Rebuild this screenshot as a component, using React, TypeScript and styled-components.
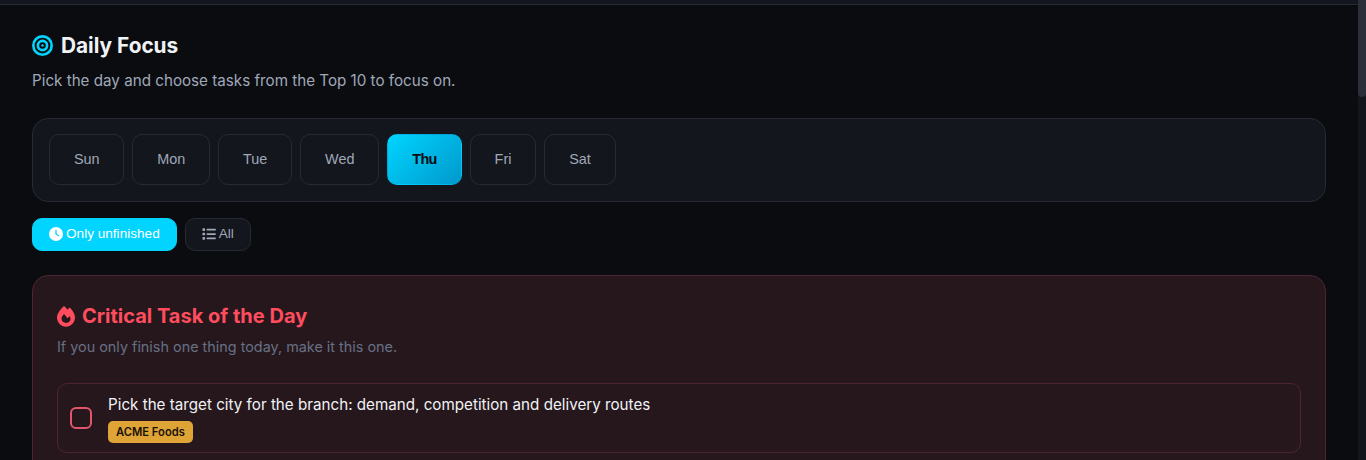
import * as React from "react";
import styled, {createGlobalStyle} from "styled-components";
import {FaBullseye, FaClock, FaFire, FaList} from "react-icons/fa6";

const days = ["Sun", "Mon", "Tue", "Wed", "Thu", "Fri", "Sat"];
const activeDay = "Thu";

const Global = createGlobalStyle`
    html, body {
        height: 100%;
        overflow: hidden;
        background: #0a0c10;
    }
    body {
        margin: 0;
        font-family: "Inter", "Liberation Sans", sans-serif;
        color: #f0f2f5;
    }
    * {
        box-sizing: border-box;
    }
`;

const Shell = styled.div`
    display: flex;
    height: 100vh;
    overflow: hidden;
    background: #0a0c10;
`;

const Content = styled.div`
    flex: 1;
    min-width: 0;
`;

const ScrollRail = styled.div`
    flex: none;
    width: 8px;
    background: #13161d;
`;

const ScrollThumb = styled.div`
    height: 97px;
    background: #2a2f3a;
    border-radius: 0 0 4px 4px;
`;

const TopBar = styled.div`
    height: 5px;
    background: #13161d;
    border-bottom: 1px solid #262a35;
`;

const Main = styled.main`
    padding: 25px 32px 32px;
`;

const Heading = styled.h1`
    display: flex;
    align-items: center;
    gap: 8px;
    margin: 0;
    height: 30px;
    font-size: 20.8px;
    font-weight: 700;
    color: #f0f2f5;
    svg {
        color: #00d4ff;
        font-size: 21px;
    }
`;

const Subtitle = styled.p`
    margin: 11px 0 0;
    font-size: 15.2px;
    line-height: 20px;
    color: #a0a8b8;
`;

const DayPanel = styled.div`
    display: flex;
    gap: 8px;
    margin-top: 27px;
    padding: 15px 16px;
    height: 84px;
    background: #13161d;
    border: 1px solid #262a35;
    border-radius: 16px;
`;

const DayButton = styled.button<{$active?: boolean}>`
    height: 51px;
    padding: 0 23.9px 2px;
    font-family: "Liberation Sans", Arial, sans-serif;
    font-size: 14.4px;
    font-weight: ${p => p.$active ? 700 : 400};
    letter-spacing: ${p => p.$active ? "-0.6px" : "0"};
    color: ${p => p.$active ? "#0a0c10" : "#a0a8b8"};
    background: ${p => p.$active ? "linear-gradient(135deg, #00d4ff, #0099cc)" : "#13161d"};
    border: 1px solid ${p => p.$active ? "transparent" : "#262a35"};
    border-radius: 10px;
`;

const FilterRow = styled.div`
    display: flex;
    gap: 8px;
    margin-top: 16px;
`;

const FilterButton = styled.button<{$active?: boolean}>`
    display: flex;
    align-items: center;
    gap: 3px;
    height: 33px;
    padding: 0 16px 2px;
    font-family: "Liberation Sans", Arial, sans-serif;
    font-size: 13.6px;
    color: ${p => p.$active ? "#ffffff" : "#a0a8b8"};
    background: ${p => p.$active ? "#00d4ff" : "#13161d"};
    border: 1px solid ${p => p.$active ? "#00d4ff" : "#262a35"};
    border-radius: 10px;
    svg {
        font-size: 14px;
    }
`;

const CriticalCard = styled.section`
    margin-top: 24px;
    padding: 24px;
    background: #26171c;
    border: 1px solid #4e2430;
    border-radius: 16px;
`;

const CriticalTitle = styled.h2`
    display: flex;
    align-items: center;
    gap: 7px;
    margin: 0;
    height: 32px;
    font-size: 20px;
    font-weight: 700;
    color: #ff4d5e;
    svg {
        width: 18px;
        height: 21px;
    }
`;

const CriticalHint = styled.p`
    margin: 5px 0 0;
    font-size: 14.4px;
    line-height: 20px;
    color: #667085;
`;

const TaskRow = styled.div`
    display: flex;
    align-items: center;
    gap: 16px;
    margin-top: 26px;
    height: 70px;
    padding: 0 12px;
    border: 1px solid #4e2430;
    border-radius: 10px;
`;

const Checkbox = styled.span`
    flex: none;
    width: 22px;
    height: 22px;
    border: 2px solid #e0566b;
    border-radius: 6px;
`;

const TaskBody = styled.div`
    display: flex;
    flex-direction: column;
    align-items: flex-start;
    gap: 6px;
    padding-top: 2px;
`;

const TaskText = styled.span`
    font-size: 15.2px;
    line-height: 20px;
    font-weight: 400;
    color: #f0f2f5;
`;

const Badge = styled.span`
    padding: 0 8px;
    font-size: 11.2px;
    line-height: 22px;
    font-weight: 600;
    color: #1a1206;
    background: #dfa436;
    border-radius: 5px;
`;

export default function App() {
    return <Shell>
        <Global />
        <Content>
            <TopBar />
            <Main>
                <Heading><FaBullseye /> Daily Focus</Heading>
                <Subtitle>Pick the day and choose tasks from the Top 10 to focus on.</Subtitle>
                <DayPanel>
                    {days.map(d => <DayButton key={d} $active={d === activeDay}>{d}</DayButton>)}
                </DayPanel>
                <FilterRow>
                    <FilterButton $active><FaClock /> Only unfinished</FilterButton>
                    <FilterButton><FaList /> All</FilterButton>
                </FilterRow>
                <CriticalCard>
                    <CriticalTitle><FaFire /> Critical Task of the Day</CriticalTitle>
                    <CriticalHint>If you only finish one thing today, make it this one.</CriticalHint>
                    <TaskRow>
                        <Checkbox />
                        <TaskBody>
                            <TaskText>Pick the target city for the branch: demand, competition and delivery routes</TaskText>
                            <Badge>ACME Foods</Badge>
                        </TaskBody>
                    </TaskRow>
                </CriticalCard>
            </Main>
        </Content>
        <ScrollRail><ScrollThumb /></ScrollRail>
    </Shell>;
}
